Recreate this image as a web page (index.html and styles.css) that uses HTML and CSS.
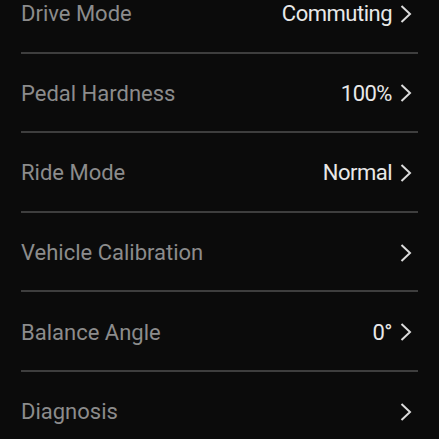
FILE: index.html
```html
<!DOCTYPE html>
<html>
<head>
<meta charset="utf-8">
<link rel="stylesheet" href="styles.css">
</head>
<body>
<div class="list">
  <div class="row"><span class="label">Drive Mode</span><span class="value">Commuting</span><svg class="chev" viewBox="0 0 12 20"><path d="M1.5 2 L10 10 L1.5 18"/></svg></div>
  <div class="row"><span class="label">Pedal Hardness</span><span class="value">100%</span><svg class="chev" viewBox="0 0 12 20"><path d="M1.5 2 L10 10 L1.5 18"/></svg></div>
  <div class="row"><span class="label">Ride Mode</span><span class="value">Normal</span><svg class="chev" viewBox="0 0 12 20"><path d="M1.5 2 L10 10 L1.5 18"/></svg></div>
  <div class="row"><span class="label">Vehicle Calibration</span><span class="value"></span><svg class="chev" viewBox="0 0 12 20"><path d="M1.5 2 L10 10 L1.5 18"/></svg></div>
  <div class="row"><span class="label">Balance Angle</span><span class="value">0°</span><svg class="chev" viewBox="0 0 12 20"><path d="M1.5 2 L10 10 L1.5 18"/></svg></div>
  <div class="row"><span class="label">Diagnosis</span><span class="value"></span><svg class="chev" viewBox="0 0 12 20"><path d="M1.5 2 L10 10 L1.5 18"/></svg></div>
</div>
</body>
</html>
```
FILE: styles.css
```css
html, body {
  margin: 0;
  padding: 0;
  background: #0b0b0b;
  overflow: hidden;
}
body {
  font-family: Roboto, "Noto Sans", sans-serif;
  font-weight: 400;
}
.list {
  margin-top: -26px;
  padding: 0 21px;
}
.row {
  box-sizing: border-box;
  height: 79.6px;
  display: flex;
  align-items: center;
  border-bottom: 2px solid #3e3e3e;
  padding: 2px 6px 0 0;
}
.label {
  flex: 1;
  font-size: 22px;
  color: #8c8c8c;
}
.value {
  font-size: 22px;
  letter-spacing: -0.5px;
  color: #e8e8e8;
  margin-right: 8px;
}
.chev {
  width: 12px;
  height: 20px;
  fill: none;
  stroke: #dcdcdc;
  stroke-width: 2;
}
```
